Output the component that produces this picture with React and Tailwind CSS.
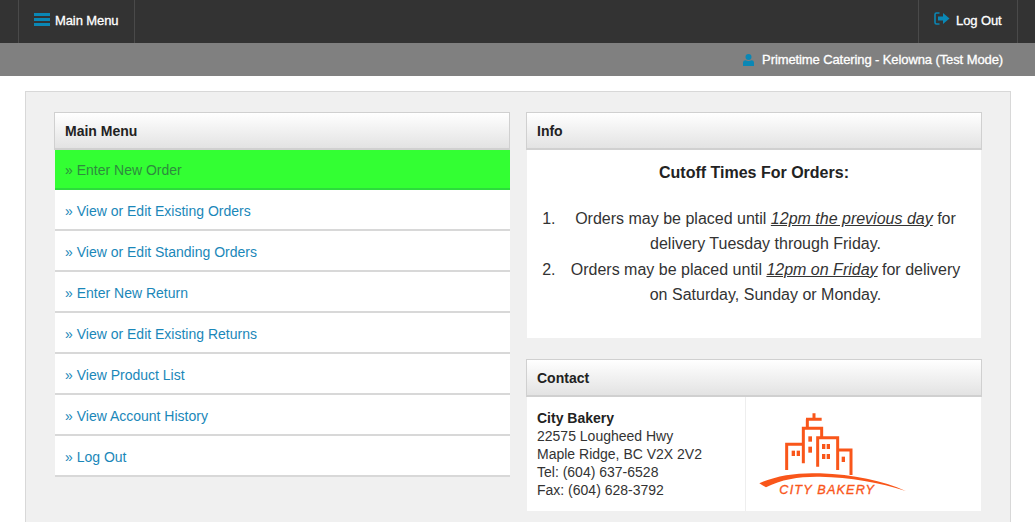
import React from "react";

function MenuBars() {
  return (
    <svg width="16" height="13" viewBox="0 0 16 13" className="mr-[5px] mb-[3px]">
      <rect x="0" y="0" width="16" height="3" fill="#0a87b5" />
      <rect x="0" y="5" width="16" height="3" fill="#0a87b5" />
      <rect x="0" y="10" width="16" height="3" fill="#0a87b5" />
    </svg>
  );
}

function LogOutIcon() {
  return (
    <svg width="16" height="14" viewBox="0 0 16 14" className="mr-[6px] mb-[3px]">
      <path d="M5.5 1H2.5Q1 1 1 2.5V10.5Q1 12 2.5 12H5.5" fill="none" stroke="#0a87b5" strokeWidth="1.6" />
      <path d="M4 4.5H9V1L15.5 6.5L9 12V8.5H4Z" fill="#0a87b5" />
    </svg>
  );
}

function UserIcon() {
  return (
    <svg width="11" height="12" viewBox="0 0 11 12" className="mr-2">
      <circle cx="5.5" cy="3" r="3" fill="#0a87b5" />
      <path d="M0 12V8.5Q0 6.3 2.5 6.2Q5.5 7.6 8.5 6.2Q11 6.3 11 8.5V12Z" fill="#0a87b5" />
    </svg>
  );
}

function Logo() {
  const c = "#f9561a";
  return (
    <svg width="188" height="112" viewBox="18 6 564 336" className="overflow-visible">
      <g fill="none" stroke={c} strokeWidth="9">
        <path d="M222 55V75M198 73H245M202 73V100M190 205V100H245V128" />
        <path d="M140 225V148H190" />
        <path d="M233 215V128H293V225" />
        <path d="M293 165H333V240" />
      </g>
      <g fill={c}>
        <rect x="205" y="124" width="11" height="16" />
        <rect x="205" y="155" width="11" height="18" />
        <rect x="155" y="167" width="10" height="16" />
        <rect x="170" y="167" width="10" height="16" />
        <rect x="246" y="147" width="10" height="15" />
        <rect x="260" y="147" width="10" height="15" />
        <rect x="246" y="177" width="10" height="15" />
        <rect x="260" y="177" width="10" height="15" />
        <rect x="305" y="185" width="10" height="16" />
        <path d="M58 265C110 240 180 232 240 235C340 238 430 258 497 288C420 262 330 247 240 245C180 244 125 252 78 277Z" />
      </g>
      <text
        x="118"
        y="298"
        fill={c}
        stroke={c}
        strokeWidth="1"
        fontFamily="'Liberation Sans', sans-serif"
        fontStyle="italic"
        fontSize="38"
        textLength="284"
        lengthAdjust="spacing"
      >
        CITY BAKERY
      </text>
    </svg>
  );
}

function CardHeader({ children }) {
  return (
    <div className="h-[38px] border border-[#d0d0d0] border-b-2 bg-gradient-to-b from-white to-[#e3e3e3] pl-[10px] pt-[2px] flex items-center font-bold text-[14px] text-[#222]">
      {children}
    </div>
  );
}

const items = [
  "View or Edit Existing Orders",
  "View or Edit Standing Orders",
  "Enter New Return",
  "View or Edit Existing Returns",
  "View Product List",
  "View Account History",
  "Log Out",
];

export default function App() {
  return (
    <div className="h-[522px] overflow-hidden bg-white font-['Liberation_Sans',Arial,sans-serif] text-[14px]">
      <header className="h-[43px] bg-[#333333] flex justify-between text-white text-[13px] tracking-[-0.1px] [-webkit-text-stroke:0.3px_white]">
        <div className="ml-[18px] w-[117px] border-x border-[#4a4a4a] flex items-center pl-[15px]">
          <span className="flex items-center -mt-[2px]">
            <MenuBars />
            <span>Main Menu</span>
          </span>
        </div>
        <div className="mr-[17px] w-[100px] border-x border-[#4a4a4a] flex items-center pl-[15px]">
          <span className="flex items-center -mt-[2px]">
            <LogOutIcon />
            <span>Log Out</span>
          </span>
        </div>
      </header>
      <div className="h-[33px] bg-[#808080] flex items-center justify-end pr-[32px] text-white text-[13px] tracking-[-0.1px] [-webkit-text-stroke:0.3px_white]">
        <UserIcon />
        <span>Primetime Catering - Kelowna (Test Mode)</span>
      </div>
      <main className="mt-[15px] ml-[25px] w-[986px] h-[500px] border border-[#d8d8d8] bg-[#f0f0f0] pt-[20px] pl-[28px] flex gap-4">
        <section className="w-[456px]">
          <CardHeader>Main Menu</CardHeader>
          <a className="h-[40px] ml-[1px] bg-[#33ff33] border-b-2 border-[#2cdc3c] pl-[10px] pt-[3px] flex items-center text-[#2e8b3e]">
            » Enter New Order
          </a>
          {items.map((t) => (
            <a key={t} className="h-[41px] ml-[1px] bg-white border-b-2 border-[#d8d8d8] pl-[10px] pt-[3px] flex items-center text-[#1a87b9]">
              » {t}
            </a>
          ))}
        </section>
        <section className="w-[456px] flex flex-col gap-[21px]">
          <div>
            <CardHeader>Info</CardHeader>
            <div className="h-[188px] mx-[1px] bg-white text-center text-[16px] leading-[25.5px] text-[#333]">
              <h3 className="pt-[10px] font-bold text-[16px] text-[#222] mb-[20px]">Cutoff Times For Orders:</h3>
              <ol className="list-decimal pl-[33px] pr-[10px]">
                <li>
                  Orders may be placed until <u><i>12pm the previous day</i></u> for delivery Tuesday through Friday.
                </li>
                <li>
                  Orders may be placed until <u><i>12pm on Friday</i></u> for delivery on Saturday, Sunday or Monday.
                </li>
              </ol>
            </div>
          </div>
          <div>
            <CardHeader>Contact</CardHeader>
            <div className="h-[114px] mx-[1px] bg-white flex">
              <div className="w-[219px] border-r border-[#eeeeee] pl-[10px] pt-[12px] leading-[18px] text-[#333]">
                <div className="font-bold text-[#222]">City Bakery</div>
                <div>22575 Lougheed Hwy</div>
                <div>Maple Ridge, BC V2X 2V2</div>
                <div>Tel: (604) 637-6528</div>
                <div>Fax: (604) 628-3792</div>
              </div>
              <div className="overflow-hidden">
                <Logo />
              </div>
            </div>
          </div>
        </section>
      </main>
    </div>
  );
}
